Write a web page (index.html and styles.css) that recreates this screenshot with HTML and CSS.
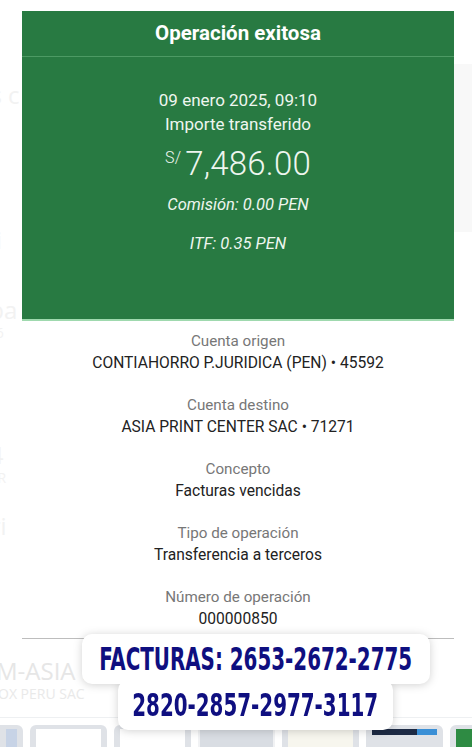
FILE: index.html
```html
<!DOCTYPE html>
<html lang="es">
<head>
  <meta charset="UTF-8">
  <title>Operación exitosa</title>
  <link rel="stylesheet" href="styles.css">
</head>
<body>
  <div class="screen">
    <div class="backdrop">
      <div class="ghost-list">
        <div class="ghost-row big">os c</div>
        <div class="ghost-row big sp1">sti</div>
        <div class="ghost-row big sp2">aba</div>
        <div class="ghost-row small">24,6</div>
        <div class="ghost-row big sp3">24</div>
        <div class="ghost-row small">DE R</div>
        <div class="ghost-row big sp4">pri</div>
        <div class="ghost-row small">NTI</div>
        <div class="ghost-row big sp5">M-ASIA PRINT</div>
        <div class="ghost-row small sp6">OX PERU SAC</div>
      </div>
      <div class="ghost-side">
        <div class="ghost-panel"></div>
      </div>
    </div>

    <div class="thumbs">
      <div class="thumb"><span class="th-inner blue"></span></div>
      <div class="thumb"><span class="th-inner"></span></div>
      <div class="thumb"><span class="th-inner"></span></div>
      <div class="thumb light"><span class="th-inner grey"></span></div>
      <div class="thumb"><span class="th-inner cream"></span></div>
      <div class="thumb"><span class="th-inner dark"></span></div>
      <div class="thumb"><span class="th-inner green"></span></div>
    </div>

    <div class="receipt">
      <div class="receipt-head">Operación exitosa</div>
      <div class="receipt-hero">
        <div class="hero-line">09 enero 2025, 09:10</div>
        <div class="hero-line">Importe transferido</div>
        <div class="amount"><span class="currency">S/</span>7,486.00</div>
        <div class="fee">Comisión: 0.00 PEN</div>
        <div class="fee itf">ITF: 0.35 PEN</div>
      </div>
      <div class="details">
        <div class="detail">
          <div class="detail-label">Cuenta origen</div>
          <div class="detail-value">CONTIAHORRO P.JURIDICA (PEN) • 45592</div>
        </div>
        <div class="detail">
          <div class="detail-label">Cuenta destino</div>
          <div class="detail-value">ASIA PRINT CENTER SAC • 71271</div>
        </div>
        <div class="detail">
          <div class="detail-label">Concepto</div>
          <div class="detail-value">Facturas vencidas</div>
        </div>
        <div class="detail">
          <div class="detail-label">Tipo de operación</div>
          <div class="detail-value">Transferencia a terceros</div>
        </div>
        <div class="detail">
          <div class="detail-label">Número de operación</div>
          <div class="detail-value">000000850</div>
        </div>
      </div>
    </div>

    <div class="sticker">
      <div class="sticker-box first"><span class="sticker-text">FACTURAS: 2653-2672-2775</span></div>
      <div class="sticker-box second"><span class="sticker-text">2820-2857-2977-3117</span></div>
    </div>
  </div>
</body>
</html>
```

FILE: styles.css
```css
* {
  margin: 0;
  padding: 0;
  box-sizing: border-box;
}

body {
  font-family: Roboto, 'Noto Sans', sans-serif;
  background: #fff;
}

.screen {
  position: relative;
  width: 472px;
  height: 747px;
  overflow: hidden;
  display: flex;
  flex-direction: column;
}

/* faded page behind the receipt */
.backdrop {
  flex: 1;
  display: flex;
  justify-content: space-between;
}

.ghost-list {
  padding-top: 82px;
  color: #f2f2f2;
  font-family: 'Open Sans', sans-serif;
  white-space: nowrap;
}

.ghost-row {
  margin-left: -24px;
}

.ghost-row.big {
  font-size: 24px;
  line-height: 26px;
}

.ghost-row.small {
  font-size: 14px;
  line-height: 18px;
  margin-top: 1px;
}

.sp1 { margin-top: 119px; }
.sp2 { margin-top: 44px; }
.sp3 { margin-top: 100px; }
.sp4 { margin-top: 26px; }

.sp5 {
  margin-top: 100px;
  margin-left: -4px;
  color: #e6e6e6;
}

.ghost-row.small.sp6 {
  margin-left: -2px;
  color: #e9e9e9;
}

.ghost-side {
  padding-top: 64px;
  width: 30px;
}

.ghost-panel {
  height: 168px;
  background: #f8f8f8;
}

.thumbs {
  display: flex;
  gap: 7px;
  margin-left: -54px;
  border-top: 1px solid #eef0f2;
  padding-top: 7px;
  height: 22px;
  box-sizing: content-box;
}

.thumb {
  flex: none;
  width: 77px;
  height: 22px;
  background: #dfe2e7;
  border-radius: 6px 6px 0 0;
  padding: 4px 6px 0;
}

.thumb.light {
  padding: 5px 2px 0;
  background: #f1f2f4;
}

.th-inner {
  display: block;
  height: 100%;
  background: #fff;
}

.th-inner.blue { background: #c7d3e6; margin-left: 54px; }
.th-inner.grey { background: #d9dde3; }
.th-inner.cream { background: #f7f6ee; }
.th-inner.dark { background: linear-gradient(to right, #1d2a44 70%, #3a8fd6 70%); height: 6px; }
.th-inner.green { background: #2e8b43; }

/* receipt modal */
.receipt {
  position: absolute;
  left: 22px;
  top: 11px;
  width: 432px;
  background: #fff;
  text-align: center;
  border-bottom: 1px solid #bdbdbd;
}

.receipt-head {
  background: #287a42;
  color: #fff;
  font-weight: 700;
  font-size: 20.5px;
  line-height: 45px;
  border-bottom: 1px solid #4d9a64;
}

.receipt-hero {
  background: #287a42;
  color: #eef6ef;
  height: 264px;
  padding-top: 31px;
  border-bottom: 2px solid #9fd9ae;
}

.hero-line {
  font-size: 17px;
  line-height: 24px;
}

.amount {
  font-size: 33px;
  font-weight: 300;
  line-height: 42px;
  margin-top: 1px;
  letter-spacing: 0.2px;
}

.currency {
  font-size: 16px;
  vertical-align: 12px;
  margin-right: 4px;
}

.fee {
  font-style: italic;
  font-size: 16.5px;
  line-height: 24px;
  margin-top: 8px;
}

.fee.itf {
  margin-top: 15px;
}

.details {
  padding: 9px 0 8px;
  display: flex;
  flex-direction: column;
  gap: 20px;
}

.detail-label {
  color: #777;
  font-size: 15.2px;
  line-height: 22px;
}

.detail-value {
  color: #222;
  font-size: 15.6px;
  line-height: 22px;
}

/* invoice sticker on top */
.sticker {
  position: absolute;
  left: 82px;
  top: 634px;
  width: 348px;
  display: flex;
  flex-direction: column;
  filter: drop-shadow(0 1px 4px rgba(0, 0, 0, 0.18));
}

.sticker-box {
  background: #fff;
  border-radius: 10px;
  display: flex;
  justify-content: center;
  align-items: center;
}

.sticker-box.first {
  height: 50px;
}

.sticker-box.second {
  width: 275px;
  height: 50px;
  margin-top: -4px;
  margin-left: 36px;
}

.sticker-text {
  display: inline-block;
  white-space: nowrap;
  font-family: 'DejaVu Sans Condensed', 'DejaVu Sans', sans-serif;
  font-weight: 700;
  font-size: 32px;
  color: #0f0f80;
  transform: scaleX(0.69);
}
```
